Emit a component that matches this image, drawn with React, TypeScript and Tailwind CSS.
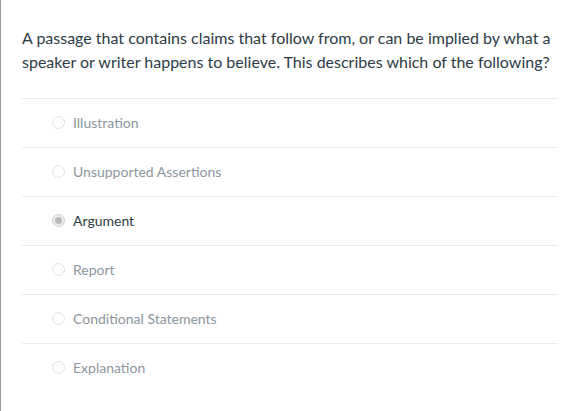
import React from "react";

const options = [
  { label: "Illustration", checked: false },
  { label: "Unsupported Assertions", checked: false },
  { label: "Argument", checked: true },
  { label: "Report", checked: false },
  { label: "Conditional Statements", checked: false },
  { label: "Explanation", checked: false },
];

export default function App() {
  return (
    <div className="min-h-[411px] bg-white border-l border-[#9a9a9a] pl-[21px] pr-[19px] pt-[26px] font-['Lato','Open_Sans',sans-serif] antialiased">
      {/* Question */}
      <p className="text-[16px] leading-[24px] text-[#2d3b45] pb-[24px]">
        A passage that contains claims that follow from, or can be implied by what a
        speaker or writer happens to believe. This describes which of the following?
      </p>

      {/* Answers */}
      <div className="flex flex-col">
        {options.map((o) => (
          <div
            key={o.label}
            className="flex items-center gap-[8px] h-[49px] border-t border-[#e8eaec] pl-[30px] pb-[2px]"
          >
            {o.checked ? (
              <span className="w-[13px] h-[13px] rounded-full border border-[#cfcfcf] bg-[#ececec] flex items-center justify-center">
                <span className="w-[7px] h-[7px] rounded-full bg-[#b8b8b8]" />
              </span>
            ) : (
              <span className="w-[13px] h-[13px] rounded-full border border-[#dfe2e4] bg-[#fdfdfd]" />
            )}
            <span
              className={
                o.checked
                  ? "text-[14px] text-[#2d3b45]"
                  : "text-[14px] text-[#8b969e]"
              }
            >
              {o.label}
            </span>
          </div>
        ))}
      </div>
    </div>
  );
}
